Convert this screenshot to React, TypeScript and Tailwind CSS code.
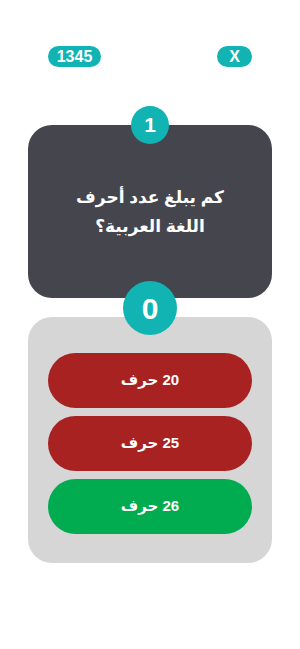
import React from "react";

export default function App() {
  const font = { fontFamily: '"Liberation Sans", "DejaVu Sans", sans-serif' };
  return (
    <div className="w-[300px] h-[649px] bg-white flex flex-col" style={font}>
      <div className="flex justify-between px-[48px] pt-[46px]">
        <div className="h-[21px] w-[53px] rounded-full bg-[#12b3b3] text-white font-bold text-[16px] flex items-center justify-center">
          1345
        </div>
        <div className="h-[21px] w-[35px] rounded-full bg-[#12b3b3] text-white font-bold text-[16px] flex items-center justify-center">
          X
        </div>
      </div>

      <div className="relative mx-[28px] mt-[58px] h-[173px] rounded-[24px] bg-[#45464d] flex items-center justify-center">
        <div className="absolute left-1/2 -translate-x-1/2 -top-[19px] w-[38px] h-[38px] rounded-full bg-[#12b3b3] text-white font-bold text-[21px] flex items-center justify-center">
          1
        </div>
        <p dir="rtl" className="text-white font-bold text-[17px] leading-[29px] text-center w-[160px]">
          كم يبلغ عدد أحرف اللغة العربية؟
        </p>
      </div>

      <div className="relative mx-[28px] mt-[19px] h-[246px] rounded-[24px] bg-[#d6d6d6] flex flex-col gap-[8px] px-[20px] pt-[36px]">
        <div className="absolute left-1/2 -translate-x-1/2 -top-[36px] w-[54px] h-[54px] rounded-full bg-[#12b3b3] text-white font-bold text-[30px] flex items-center justify-center">
          0
        </div>
        <button dir="rtl" className="h-[55px] rounded-full bg-[#a82222] text-white font-bold text-[15px] flex items-center justify-center">
          20 حرف
        </button>
        <button dir="rtl" className="h-[55px] rounded-full bg-[#a82222] text-white font-bold text-[15px] flex items-center justify-center">
          25 حرف
        </button>
        <button dir="rtl" className="h-[55px] rounded-full bg-[#00ac4f] text-white font-bold text-[15px] flex items-center justify-center">
          26 حرف
        </button>
      </div>
    </div>
  );
}
